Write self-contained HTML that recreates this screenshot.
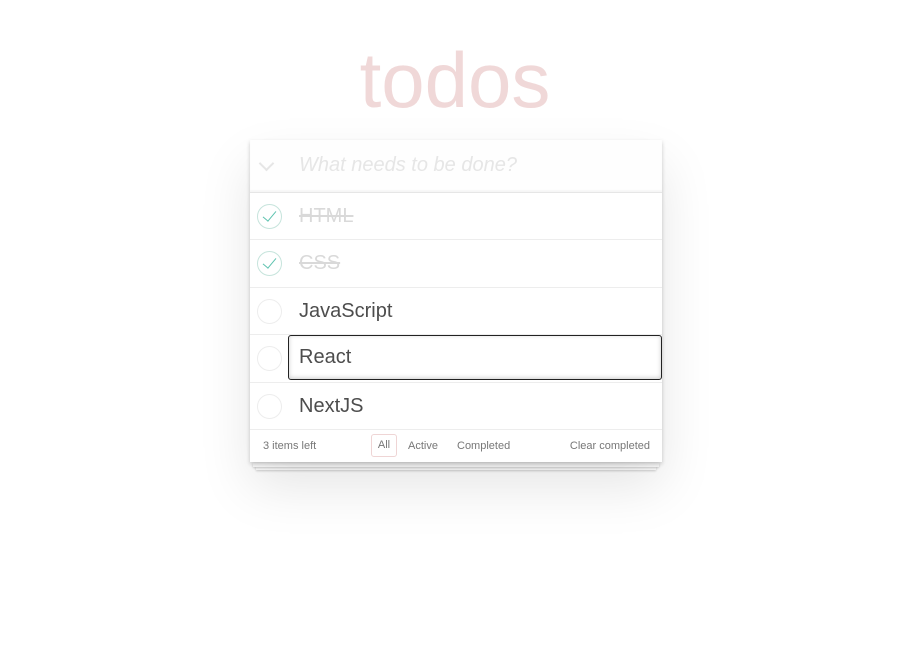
<!DOCTYPE html>
<html><head><meta charset="utf-8"><style>
body{margin:0;width:900px;height:652px;background:#fff;font-family:"Liberation Sans",Arial,sans-serif;position:relative;overflow:hidden}
.t{position:absolute;left:0;width:910px;text-align:center;top:40px;font-size:78px;line-height:80px;color:#f0d8d8}
.app{position:absolute;left:250px;top:140px;width:412px;background:#fff;box-shadow:0 2px 4px rgba(0,0,0,.2),0 25px 50px rgba(0,0,0,.1)}
.new{height:52px;border-bottom:1px solid #e6e6e6;background:#fefefe;box-shadow:inset 0 -2px 1px rgba(0,0,0,.03);position:relative}
.new span{position:absolute;left:49px;top:14px;font-size:20px;font-style:italic;color:#e6e6e6}
.chev{position:absolute;left:11px;top:18px;width:9px;height:9px;border-right:2px solid #e6e6e6;border-bottom:2px solid #e6e6e6;transform:rotate(45deg);}
.it{height:46.4px;border-bottom:1px solid #ededed;position:relative;font-size:20px;color:#4d4d4d}
.it .c{position:absolute;left:7px;top:11px;width:23px;height:23px;border:1px solid #ededed;border-radius:50%}
.it .c.d{border-color:#c6e4dc}
.it .c.d:after{content:"";position:absolute;left:8px;top:3px;width:6px;height:12px;border-right:1.5px solid #5dc2af;border-bottom:1.5px solid #5dc2af;transform:rotate(40deg)}
.it .x{position:absolute;left:49px;top:12px}
.it .x.done{color:#d9d9d9;text-decoration:line-through}
.ed{position:absolute;left:38px;top:0;width:372px;height:43px;border:1.5px solid #222;border-radius:3px;box-shadow:inset 0 -1px 5px rgba(0,0,0,.2)}
.ed span{position:absolute;left:10px;top:10px}
.ft{height:32px;position:relative;font-size:11px;color:#777}
.ft span{position:absolute;top:10px}
.all{position:absolute;left:121px;top:4px;width:24px;height:21px;border:1px solid #efd5d5;border-radius:3px;text-align:center;line-height:21px}
.s1,.s2{position:absolute;height:4px;background:#fff;box-shadow:0 1px 2px rgba(0,0,0,.2)}
</style></head><body>
<div class="t">todos</div>
<div class="s2" style="left:256px;width:400px;top:466px"></div>
<div class="s1" style="left:253px;width:406px;top:463px"></div>
<div class="app">
<div class="new"><div class="chev"></div><span>What needs to be done?</span></div>
<div class="it"><div class="c d"></div><span class="x done">HTML</span></div>
<div class="it"><div class="c d"></div><span class="x done">CSS</span></div>
<div class="it"><div class="c"></div><span class="x">JavaScript</span></div>
<div class="it"><div class="c"></div><div class="ed"><span>React</span></div></div>
<div class="it"><div class="c"></div><span class="x">NextJS</span></div>
<div class="ft"><span style="left:13px">3 items left</span><div class="all">All</div><span style="left:158px">Active</span><span style="left:207px">Completed</span><span style="right:12px">Clear completed</span></div>
</div>
</body></html>
